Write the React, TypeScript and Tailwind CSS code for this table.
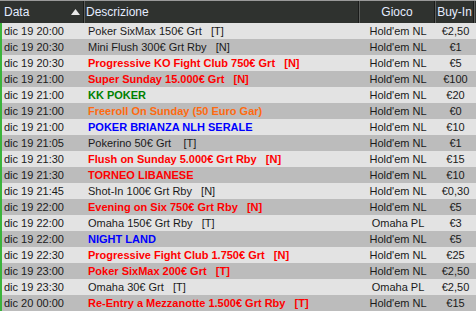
import React from "react";

type Row = { d: string; t: string; c: "n" | "r" | "g" | "o" | "b"; g: string; b: string };

const rows: Row[] = [
  { d: "dic 19 20:00", t: "Poker SixMax 150€ Grt   [T]", c: "n", g: "Hold'em NL", b: "€2,50" },
  { d: "dic 19 20:30", t: "Mini Flush 300€ Grt Rby   [N]", c: "n", g: "Hold'em NL", b: "€1" },
  { d: "dic 19 20:30", t: "Progressive KO Fight Club 750€ Grt   [N]", c: "r", g: "Hold'em NL", b: "€5" },
  { d: "dic 19 21:00", t: "Super Sunday 15.000€ Grt   [N]", c: "r", g: "Hold'em NL", b: "€100" },
  { d: "dic 19 21:00", t: "KK POKER", c: "g", g: "Hold'em NL", b: "€20" },
  { d: "dic 19 21:00", t: "Freeroll On Sunday (50 Euro Gar)", c: "o", g: "Hold'em NL", b: "€0" },
  { d: "dic 19 21:00", t: "POKER BRIANZA NLH SERALE", c: "b", g: "Hold'em NL", b: "€10" },
  { d: "dic 19 21:05", t: "Pokerino 50€ Grt    [T]", c: "n", g: "Hold'em NL", b: "€1" },
  { d: "dic 19 21:30", t: "Flush on Sunday 5.000€ Grt Rby   [N]", c: "r", g: "Hold'em NL", b: "€15" },
  { d: "dic 19 21:30", t: "TORNEO LIBANESE", c: "r", g: "Hold'em NL", b: "€10" },
  { d: "dic 19 21:45", t: "Shot-In 100€ Grt Rby   [N]", c: "n", g: "Hold'em NL", b: "€0,30" },
  { d: "dic 19 22:00", t: "Evening on Six 750€ Grt Rby   [N]", c: "r", g: "Hold'em NL", b: "€5" },
  { d: "dic 19 22:00", t: "Omaha 150€ Grt Rby   [T]", c: "n", g: "Omaha PL", b: "€3" },
  { d: "dic 19 22:00", t: "NIGHT LAND", c: "b", g: "Hold'em NL", b: "€5" },
  { d: "dic 19 22:30", t: "Progressive Fight Club 1.750€ Grt   [N]", c: "r", g: "Hold'em NL", b: "€25" },
  { d: "dic 19 23:00", t: "Poker SixMax 200€ Grt   [T]", c: "r", g: "Hold'em NL", b: "€2,50" },
  { d: "dic 19 23:30", t: "Omaha 30€ Grt   [T]", c: "n", g: "Omaha PL", b: "€2,50" },
  { d: "dic 20 00:00", t: "Re-Entry a Mezzanotte 1.500€ Grt Rby   [T]", c: "r", g: "Hold'em NL", b: "€15" },
];

function descClass(c: Row["c"]) {
  if (c === "r") return "text-[#ff0000] font-bold";
  if (c === "g") return "text-[#008000] font-bold";
  if (c === "o") return "text-[#ff6a10] font-bold";
  if (c === "b") return "text-[#0000ff] font-bold";
  return "text-[#1a1a1a]";
}

function Sep() {
  return (
    <div className="flex h-full shrink-0">
      <div className="w-px h-full bg-[#1a1b1a]" />
      <div className="w-px h-full bg-[#5c5e5c]" />
    </div>
  );
}

export default function App() {
  return (
    <div
      className="w-[476px] h-[311px] overflow-hidden bg-[#e3e3e3] text-[11px]"
      style={{ fontFamily: '"Liberation Sans", Arial, sans-serif' }}
    >
      <div className="h-px bg-[#9a9a9a]" />
      <div className="flex h-[22px] bg-[#2f322f] text-[#e4ecff] text-[12px] items-center">
        <div className="w-[83px] h-full flex items-center justify-between pl-[4px] pr-[3px]">
          <span>Data</span>
          <svg width="9" height="6" viewBox="0 0 9 6" className="mb-[1px]">
            <polygon points="4.5,0 9,6 0,6" fill="#e8e8e8" />
          </svg>
        </div>
        <Sep />
        <div className="w-[273px] h-full flex items-center pl-[1px]">Descrizione</div>
        <Sep />
        <div className="w-[74px] h-full flex items-center justify-center">Gioco</div>
        <Sep />
        <div className="w-[37px] h-full flex items-center justify-center">Buy-In</div>
        <Sep />
        <div className="flex-1" />
      </div>
      <div className="border-l-2 border-[#3cb43c]">
        {rows.map((r, i) => (
          <div
            key={i}
            className={`flex h-[16px] leading-[16px] ${i % 2 === 0 ? "bg-[#e3e3e3]" : "bg-[#bcbcbc]"}`}
          >
            <div className="w-[83px] pl-[2px] text-[#1a1a1a] whitespace-pre">{r.d}</div>
            <div className={`w-[275px] pl-[3px] whitespace-pre ${descClass(r.c)}`}>{r.t}</div>
            <div className="w-[76px] text-center text-[#1a1a1a] whitespace-pre">{r.g}</div>
            <div className="w-[39px] text-center text-[#1a1a1a] whitespace-pre">{r.b}</div>
            <div className="flex-1" />
          </div>
        ))}
      </div>
    </div>
  );
}
